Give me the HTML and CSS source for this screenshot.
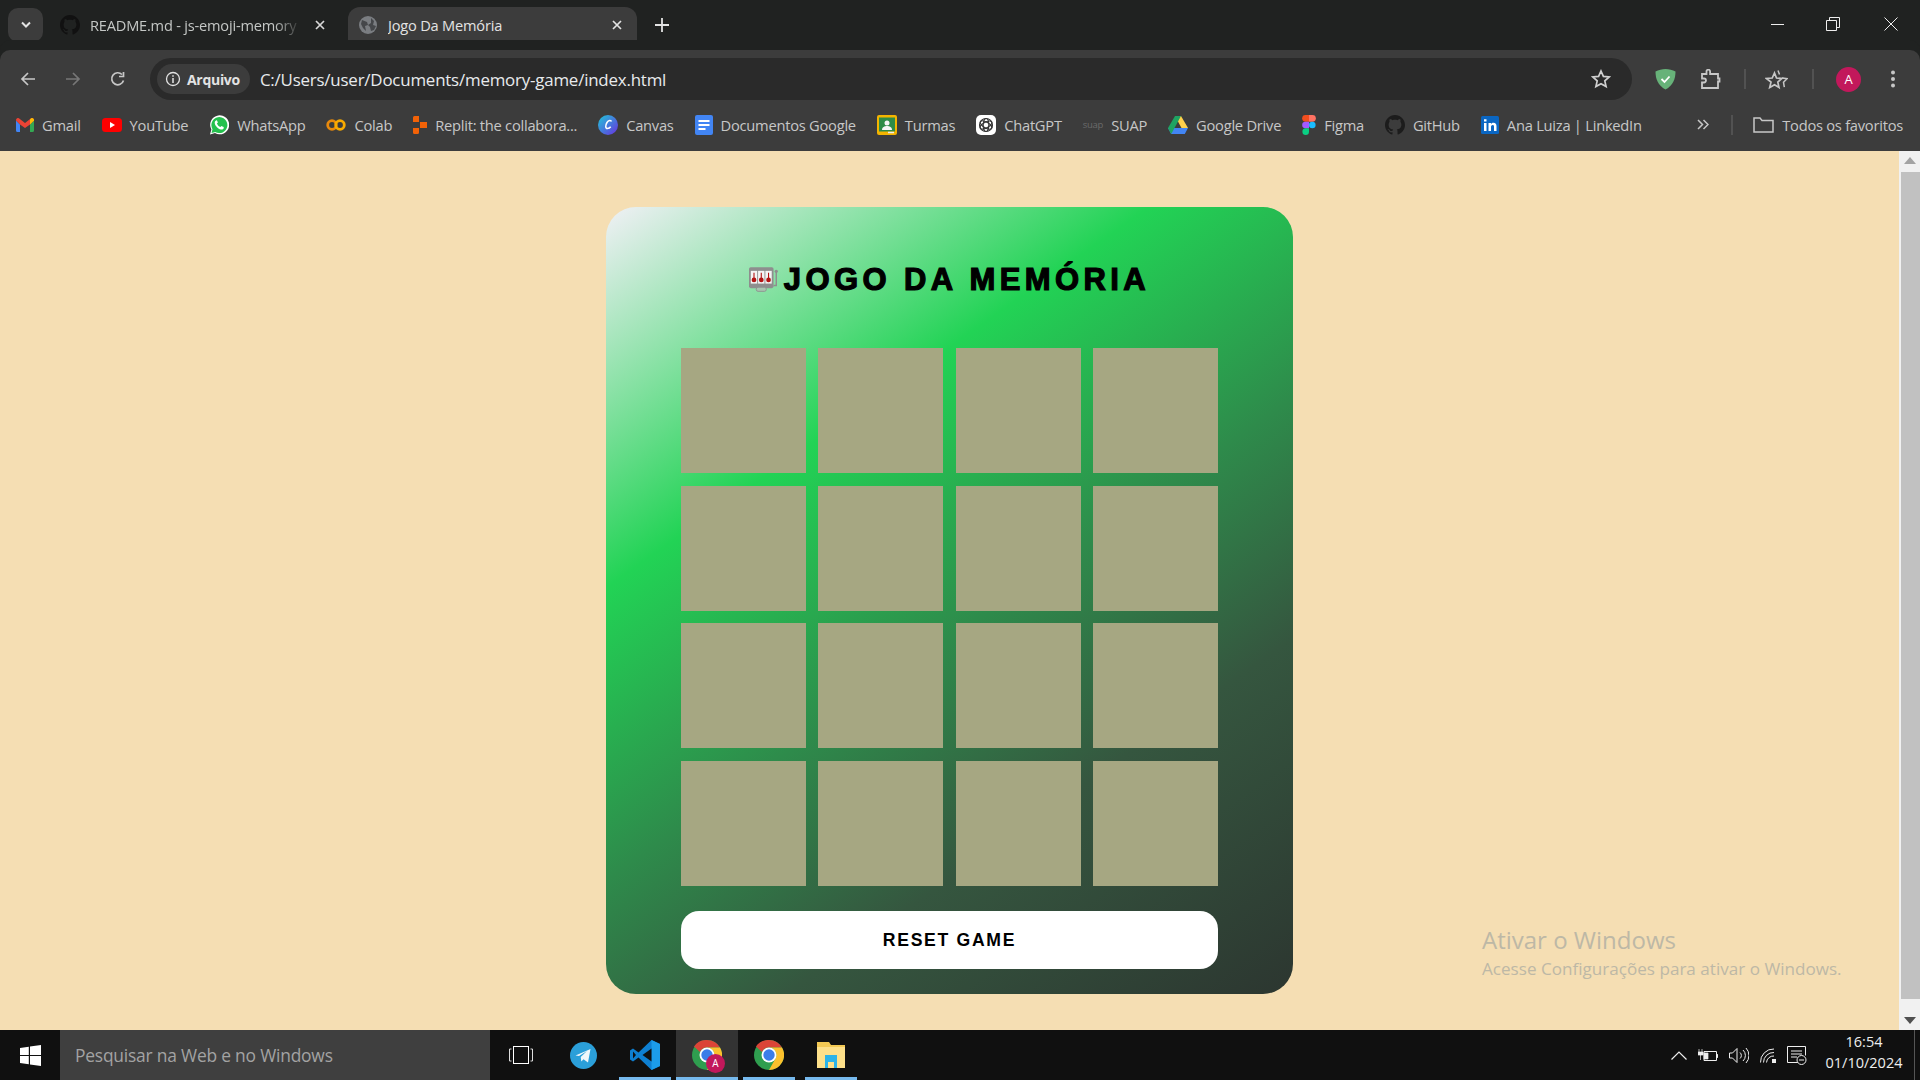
FILE: index.html
```html
<!DOCTYPE html>
<html lang="pt-BR">
<head>
<meta charset="UTF-8">
<title>Jogo Da Memória</title>
<link rel="stylesheet" href="styles.css">
</head>
<body>

<div class="tabbar">
    <div class="tab-search"><svg width="12" height="8" viewBox="0 0 12 8"><path d="M2 1.500l4 4 4-4" fill="none" stroke="#e3e3e3" stroke-width="2"/></svg></div>
    <div class="tab">
        <svg width="20" height="20" viewBox="0 0 16 16"><path fill="#111" d="M8 0C3.600 0 0 3.600 0 8c0 3.500 2.300 6.500 5.500 7.600.4.100.5-.2.500-.4v-1.400c-2.200.5-2.700-1-2.700-1-.4-.9-.9-1.200-.9-1.200-.7-.5.100-.5.100-.5.800.1 1.200.8 1.200.8.700 1.200 1.900.9 2.300.7.100-.5.300-.9.500-1.100-1.800-.2-3.600-.9-3.600-4 0-.9.300-1.600.8-2.100-.1-.2-.4-1 .1-2.100 0 0 .7-.2 2.200.8.600-.2 1.300-.3 2-.3s1.400.1 2 .3c1.500-1 2.200-.8 2.200-.8.400 1.100.2 1.900.1 2.100.5.600.8 1.300.8 2.100 0 3.100-1.900 3.700-3.700 3.900.3.300.6.800.6 1.500v2.200c0 .2.100.5.600.4C13.700 14.500 16 11.500 16 8c0-4.400-3.600-8-8-8z"/></svg>
        <span class="tab-title tab-title-fade">README.md - js-emoji-memory</span>
        <svg class="tab-close" width="12" height="12" viewBox="0 0 12 12"><path d="M2 2l8 8M10 2l-8 8" stroke="#d8d8d8" stroke-width="1.700"/></svg>
    </div>
    <div class="tab tab-active">
        <svg width="20" height="20" viewBox="0 0 20 20"><circle cx="10" cy="10" r="9" fill="#7a7d81"/><path d="M4 5l5 2 1 3-3 1 1 5-3-3-2-4zM13 3l3 3-1 4 3 1-2 4-3 1-1-4-2-2 3-2z" fill="#45474a"/></svg>
        <span class="tab-title">Jogo Da Memória</span>
        <svg class="tab-close" width="12" height="12" viewBox="0 0 12 12"><path d="M2 2l8 8M10 2l-8 8" stroke="#e3e3e3" stroke-width="1.700"/></svg>
    </div>
    <svg class="tab-new" width="14" height="14" viewBox="0 0 14 14"><path d="M7 0v14M0 7h14" stroke="#e3e3e3" stroke-width="1.800"/></svg>
    <div class="window-controls">
        <svg width="14" height="14" viewBox="0 0 14 14"><path d="M0 7.500h13" stroke="#eee" stroke-width="1"/></svg>
        <svg width="14" height="14" viewBox="0 0 14 14"><path d="M.5 3.500h10v10H.5zM3.500 3.500V.5h10v10h-3" fill="none" stroke="#eee" stroke-width="1"/></svg>
        <svg width="14" height="14" viewBox="0 0 14 14"><path d="M.5.5l13 13M13.500.5l-13 13" stroke="#eee" stroke-width="1"/></svg>
    </div>
</div>

<div class="toolbar">
    <div class="nav-buttons">
        <svg width="16" height="16" viewBox="0 0 16 16"><path d="M15 8H2M8 2L2 8l6 6" fill="none" stroke="#c7c7c7" stroke-width="1.700"/></svg>
        <svg width="16" height="16" viewBox="0 0 16 16"><path d="M1 8h13M8 2l6 6-6 6" fill="none" stroke="#777" stroke-width="1.700"/></svg>
        <svg width="16" height="16" viewBox="0 0 16 16"><path d="M13.500 9.500A6 6 0 1 1 12 3.500M13.500 1v4.500H9" fill="none" stroke="#c7c7c7" stroke-width="1.700"/></svg>
    </div>
    <div class="omnibox">
        <div class="site-chip">
            <svg width="16" height="16" viewBox="0 0 16 16"><circle cx="8" cy="8" r="6.500" fill="none" stroke="#e3e3e3" stroke-width="1.300"/><path d="M8 7v5M8 4.200v1.600" stroke="#e3e3e3" stroke-width="1.500"/></svg>
            <span>Arquivo</span>
        </div>
        <span class="url">C:/Users/user/Documents/memory-game/index.html</span>
        <svg class="url-star" width="20" height="20" viewBox="0 0 20 20"><path d="M10 2l2.400 5.400 5.800.6-4.400 3.900 1.300 5.700L10 14.700l-5.100 2.900 1.300-5.700L1.800 8l5.800-.6z" fill="none" stroke="#d0d0d0" stroke-width="1.700"/></svg>
    </div>
    <div class="toolbar-actions">
        <svg class="act-shield" width="21" height="22" viewBox="0 0 21 22"><path d="M10.500 1C7 1 3.500 2 .5 3.500.5 11 3 17.500 10.500 21.500 18 17.500 20.500 11 20.500 3.500 17.500 2 14 1 10.500 1z" fill="#67b279"/><path d="M6.500 11l3 3 5-5.500" fill="none" stroke="#fff" stroke-width="1.800"/></svg>
        <svg class="act-ext" width="20" height="20" viewBox="0 0 20 20"><path d="M1 5h4.500V2.500a1.800 1.800 0 0 1 3.600 0V5H17v4.500h1.500v3H17V19H1v-5.500h2a2 2 0 0 0 0-4H1z" fill="none" stroke="#c7c7c7" stroke-width="1.800"/></svg>
        <div class="act-sep act-sep-a"></div>
        <svg class="act-favs" width="23" height="21" viewBox="0 0 23 21"><path d="M9.500 4l2 5 5.400.5-4.100 3.600 1.200 5.400-4.500-2.800-4.800 2.800 1.300-5.400L1.500 9.500l5.700-.5z" fill="none" stroke="#c7c7c7" stroke-width="1.700"/><path d="M13 1.500l1.500 4M17 9l5 .7-3.500 3.500.8 5" fill="none" stroke="#c7c7c7" stroke-width="1.500"/></svg>
        <div class="act-sep act-sep-b"></div>
        <div class="avatar">A</div>
        <svg class="act-menu" width="4" height="18" viewBox="0 0 4 18"><circle cx="2" cy="2.500" r="2" fill="#c7c7c7"/><circle cx="2" cy="9" r="2" fill="#c7c7c7"/><circle cx="2" cy="15.500" r="2" fill="#c7c7c7"/></svg>
    </div>
</div>

<div class="bookmarks">
    <div class="bm">
        <svg width="18" height="14" viewBox="0 0 18 14"><path d="M0 2.500V12.500A1.500 1.500 0 0 0 1.500 14H4V6.500z" fill="#4285f4"/><path d="M14 6.500V14h2.500a1.500 1.500 0 0 0 1.500-1.500v-10z" fill="#34a853"/><path d="M0 2.500L4 6.500l5 3.500 5-3.500 4-4V2a2 2 0 0 0-3.200-1.600L9 5 3.200.4A2 2 0 0 0 0 2z" fill="#ea4335"/><path d="M14 1.500l.8-1.100A2 2 0 0 1 18 2v.5l-4 4z" fill="#fbbc04"/></svg>
        <span>Gmail</span>
    </div>
    <div class="bm">
        <svg width="20" height="14" viewBox="0 0 20 14"><rect width="20" height="14" rx="3.500" fill="#f00"/><path d="M8 4l5 3-5 3z" fill="#fff"/></svg>
        <span>YouTube</span>
    </div>
    <div class="bm">
        <svg width="20" height="20" viewBox="0 0 20 20"><path d="M1 19.500l1.400-5A9.500 9.500 0 1 1 6 18.100z" fill="#fff"/><path d="M2.500 18l1-3.800A8 8 0 1 1 6.300 17z" fill="#25c04e"/><path d="M7 5.500c-.8.400-1.500 1.500-1.200 3 .5 2.400 3.400 5.500 6 6 1.500.2 2.700-.6 3-1.600l-.2-1-2.200-1-1 1.200c-1.500-.5-3-2-3.500-3.500l1-1-1-2.300z" fill="#fff"/></svg>
        <span>WhatsApp</span>
    </div>
    <div class="bm">
        <svg width="20" height="12" viewBox="0 0 20 12"><circle cx="6" cy="6" r="4.300" fill="none" stroke="#e8890c" stroke-width="2.800"/><circle cx="14" cy="6" r="4.300" fill="none" stroke="#f9ab00" stroke-width="2.800"/></svg>
        <span>Colab</span>
    </div>
    <div class="bm bm-replit">
        <svg width="14" height="18" viewBox="0 0 14 18"><path d="M0 1.500A1.500 1.500 0 0 1 1.500 0H6v6H0zM7 6h7v6H7zM0 12h6v4.500A1.500 1.500 0 0 1 4.500 18h-3A1.500 1.500 0 0 1 0 16.500z" fill="#f26207"/></svg>
        <span>Replit: the collabora...</span>
    </div>
    <div class="bm">
        <svg width="20" height="20" viewBox="0 0 20 20"><defs><linearGradient id="canvasFill" x1="0" y1="0" x2="1" y2="1"><stop offset="0" stop-color="#1fc8d8"/><stop offset="1" stop-color="#6a2fe0"/></linearGradient></defs><circle cx="10" cy="10" r="10" fill="url(#canvasFill)"/><path d="M13.500 6.500c-.5-1.500-3-1.500-4.500 1s-2 6 .5 6c1.300 0 2.500-.8 3.200-1.800" fill="none" stroke="#fff" stroke-width="1.500"/></svg>
        <span>Canvas</span>
    </div>
    <div class="bm">
        <svg width="18" height="20" viewBox="0 0 18 20"><rect width="18" height="20" rx="2" fill="#4285f4"/><path d="M3.500 6h11M3.500 10h11M3.500 14h7" stroke="#fff" stroke-width="2"/></svg>
        <span>Documentos Google</span>
    </div>
    <div class="bm">
        <svg width="20" height="20" viewBox="0 0 20 20"><rect width="20" height="20" rx="2" fill="#f4b400"/><rect x="2" y="2.500" width="16" height="14" fill="#2e8b47"/><circle cx="10" cy="8" r="2.500" fill="#f5f5f5"/><path d="M5 15c0-3 2.500-4 5-4s5 1 5 4z" fill="#f5f5f5"/><path d="M11 17.500h6" stroke="#eee" stroke-width="1.500"/></svg>
        <span>Turmas</span>
    </div>
    <div class="bm">
        <svg width="20" height="20" viewBox="0 0 20 20"><rect width="20" height="20" rx="5" fill="#fff"/><g fill="none" stroke="#333" stroke-width="1.100"><circle cx="10" cy="10" r="6.500"/><ellipse cx="10" cy="10" rx="6.500" ry="2.800" transform="rotate(30 10 10)"/><ellipse cx="10" cy="10" rx="6.500" ry="2.800" transform="rotate(90 10 10)"/><ellipse cx="10" cy="10" rx="6.500" ry="2.800" transform="rotate(150 10 10)"/></g></svg>
        <span>ChatGPT</span>
    </div>
    <div class="bm">
        <span class="suap-logo">suap</span>
        <span>SUAP</span>
    </div>
    <div class="bm">
        <svg width="20" height="18" viewBox="0 0 20 18"><path d="M13 0l7 12h-6.500L7 0z" fill="#ffd04b"/><path d="M4 12h16l-3.200 6H3.200L0 12z" fill="#4285f4"/><path d="M7 0h6L6.500 12 3.200 18 0 12z" fill="#1fa463"/></svg>
        <span>Google Drive</span>
    </div>
    <div class="bm bm-figma">
        <svg width="14" height="20" viewBox="0 0 14 20"><path d="M7 0H3.500a3.300 3.300 0 0 0 0 6.700H7z" fill="#f24e1e"/><path d="M7 0h3.500a3.300 3.300 0 0 1 0 6.700H7z" fill="#ff7262"/><path d="M7 6.700H3.500a3.300 3.300 0 0 0 0 6.600H7z" fill="#a259ff"/><circle cx="10.300" cy="10" r="3.300" fill="#1abcfe"/><path d="M7 13.300H3.500A3.300 3.300 0 1 0 7 16.700z" fill="#0acf83"/></svg>
        <span>Figma</span>
    </div>
    <div class="bm">
        <svg width="20" height="20" viewBox="0 0 16 16"><path fill="#1c1c1c" d="M8 0C3.600 0 0 3.600 0 8c0 3.500 2.300 6.500 5.500 7.600.4.100.5-.2.500-.4v-1.400c-2.200.5-2.700-1-2.700-1-.4-.9-.9-1.200-.9-1.200-.7-.5.100-.5.100-.5.800.1 1.200.8 1.200.8.700 1.200 1.900.9 2.300.7.100-.5.300-.9.500-1.100-1.800-.2-3.600-.9-3.600-4 0-.9.300-1.600.8-2.100-.1-.2-.4-1 .1-2.100 0 0 .7-.2 2.200.8.600-.2 1.300-.3 2-.3s1.400.1 2 .3c1.500-1 2.200-.8 2.200-.8.400 1.100.2 1.900.1 2.100.5.600.8 1.300.8 2.100 0 3.100-1.900 3.700-3.700 3.900.3.300.6.800.6 1.500v2.200c0 .2.100.5.600.4C13.700 14.500 16 11.500 16 8c0-4.400-3.600-8-8-8z"/></svg>
        <span>GitHub</span>
    </div>
    <div class="bm">
        <svg width="18" height="18" viewBox="0 0 18 18"><rect width="18" height="18" rx="1.500" fill="#0a66c2"/><path d="M3 7h2.500v8H3zM3 3.200h2.500v2.400H3zM7.500 7H10v1.200c.5-.9 1.400-1.400 2.500-1.400 2 0 3 1.200 3 3.500V15H13v-4.200c0-1.200-.4-1.800-1.300-1.800-1 0-1.700.7-1.700 2V15H7.500z" fill="#fff"/></svg>
        <span>Ana Luiza | LinkedIn</span>
    </div>
    <div class="bm-end">
        <svg width="12" height="11" viewBox="0 0 12 11"><path d="M1 1l4.500 4.500L1 10M6.500 1L11 5.500 6.500 10" fill="none" stroke="#c7c7c7" stroke-width="1.500"/></svg>
        <div class="bm-sep"></div>
        <div class="bm">
            <svg width="21" height="16" viewBox="0 0 21 16"><path d="M1 15V1h6l2 2.500h11V15z" fill="none" stroke="#c7c7c7" stroke-width="1.500"/></svg>
            <span>Todos os favoritos</span>
        </div>
    </div>
</div>

<div class="viewport">
    <main class="page">
        <div class="game-container">
            <h1 class="game-title">
                <svg class="slot-emoji" width="30" height="27" viewBox="0 0 33 27">
                    <rect x="0" y="0" width="27" height="23" rx="2" fill="#8e8e8e"/>
                    <rect x="8" y="22" width="11" height="4.500" rx="2" fill="#a8c4b0" stroke="#8e8e8e"/>
                    <rect x="2" y="4" width="7" height="14" fill="#f4f4f4"/>
                    <rect x="10" y="4" width="7" height="14" fill="#f4f4f4"/>
                    <rect x="18" y="4" width="7" height="14" fill="#f4f4f4"/>
                    <path d="M5.500 6v6M13.500 6v6M21.500 6v6" stroke="#b31414" stroke-width="1.200"/>
                    <circle cx="5.500" cy="14" r="2.600" fill="#b31414"/>
                    <circle cx="13.500" cy="14" r="2.600" fill="#b31414"/>
                    <circle cx="21.500" cy="14" r="2.600" fill="#b31414"/>
                    <path d="M30 5v15h-3" fill="none" stroke="#8e8e8e" stroke-width="1.600"/>
                    <circle cx="30" cy="4.500" r="1.800" fill="#8e8e8e"/>
                </svg>JOGO DA MEMÓRIA
            </h1>
            <div class="game">
                <div class="item"></div><div class="item"></div><div class="item"></div><div class="item"></div>
                <div class="item"></div><div class="item"></div><div class="item"></div><div class="item"></div>
                <div class="item"></div><div class="item"></div><div class="item"></div><div class="item"></div>
                <div class="item"></div><div class="item"></div><div class="item"></div><div class="item"></div>
            </div>
            <button class="reset">RESET GAME</button>
        </div>
        <div class="watermark">
            <div class="watermark-title">Ativar o Windows</div>
            <div class="watermark-sub">Acesse Configurações para ativar o Windows.</div>
        </div>
    </main>
    <div class="scrollbar">
        <svg width="12" height="7" viewBox="0 0 12 7"><path d="M6 0l6 7H0z" fill="#a3a3a3"/></svg>
        <div class="scroll-thumb"></div>
        <svg width="12" height="7" viewBox="0 0 12 7"><path d="M6 7L0 0h12z" fill="#505050"/></svg>
    </div>
</div>

<div class="taskbar">
    <div class="start">
        <svg width="21" height="21" viewBox="0 0 21 21"><path d="M0 3l8.800-1.300v8.200H0zM10 1.500L21 0v9.900H10zM0 11.100h8.800v8.200L0 18zM10 11.100h11V21l-11-1.500z" fill="#fff"/></svg>
    </div>
    <div class="task-search">Pesquisar na Web e no Windows</div>
    <div class="task-icons">
        <div class="task-icon">
            <svg width="24" height="18" viewBox="0 0 24 18"><rect x="4.500" y=".5" width="15" height="17" fill="none" stroke="#fff"/><path d="M2.500 3H.5v12h2M21.500 3h2v12h-2" fill="none" stroke="#ddd"/></svg>
        </div>
        <div class="task-icon">
            <svg width="27" height="27" viewBox="0 0 27 27"><circle cx="13.500" cy="13.500" r="13.500" fill="#2b9fd9"/><path d="M5.500 13.500L20.500 7l-2.500 13.500-4.500-3.300-2.200 2.300-.6-4.500 6.300-6-8 5z" fill="#f2f7fa"/></svg>
        </div>
        <div class="task-icon task-open">
            <svg width="30" height="30" viewBox="0 0 30 30"><path d="M21.500 0L30 4v22l-8.500 4-13-12.500L3 21.500 0 19.500v-9l3-2 5.500 4z" fill="#0e7fd1"/><path d="M21.500 0L30 4v22l-8.500 4z" fill="#1c9cea"/><path d="M21.500 8.500L12.500 15l9 6.500z" fill="#101010"/><path d="M3 11.500L6 15l-3 3.500z" fill="#101010"/></svg>
        </div>
        <div class="task-icon task-open task-active">
            <svg class="chrome-logo" width="30" height="30" viewBox="0 0 30 30"><circle cx="15" cy="15" r="15" fill="#2f9e4f"/><path d="M15 0a15 15 0 0 1 13 7.500H15a7.500 7.500 0 0 0-7 4.500L2 6.500A15 15 0 0 1 15 0z" fill="#db4437"/><path d="M28 7.500A15 15 0 0 1 15 30l6.500-11.500A7.500 7.500 0 0 0 15 7.500z" fill="#fbc02d"/><circle cx="15" cy="15" r="7.500" fill="#fff"/><circle cx="15" cy="15" r="5.700" fill="#3b7de8"/></svg>
            <span class="chrome-badge">A</span>
        </div>
        <div class="task-icon task-open">
            <svg width="30" height="30" viewBox="0 0 30 30"><circle cx="15" cy="15" r="15" fill="#2f9e4f"/><path d="M15 0a15 15 0 0 1 13 7.500H15a7.500 7.500 0 0 0-7 4.500L2 6.500A15 15 0 0 1 15 0z" fill="#db4437"/><path d="M28 7.500A15 15 0 0 1 15 30l6.500-11.500A7.500 7.500 0 0 0 15 7.500z" fill="#fbc02d"/><circle cx="15" cy="15" r="7.500" fill="#fff"/><circle cx="15" cy="15" r="5.700" fill="#3b7de8"/></svg>
        </div>
        <div class="task-icon task-open">
            <svg width="28" height="26" viewBox="0 0 28 26"><path d="M0 0h12l2 3h14v23H0z" fill="#f3c954"/><path d="M0 5h28v21H0z" fill="#fde08a"/><path d="M8 13h12v13h-3v-6h-6v6H8z" fill="#2bb3e8"/></svg>
        </div>
    </div>
    <div class="tray">
        <svg width="16" height="9" viewBox="0 0 16 9"><path d="M.5 8.500L8 1l7.500 7.500" fill="none" stroke="#eee" stroke-width="1.200"/></svg>
        <svg width="20" height="13" viewBox="0 0 20 13"><path d="M6 2.500h12.500v9H6z" fill="none" stroke="#eee"/><path d="M6 4h4v6H6zM18.500 5.500H20v3h-1.500zM1 0v3M4 0v3M0 3h5v3H0zM2.500 6v5" fill="#eee" stroke="#eee" stroke-width=".7"/></svg>
        <svg width="20" height="17" viewBox="0 0 20 17"><path d="M.5 6h3L8 1.500v14L3.500 11h-3z" fill="none" stroke="#eee"/><path d="M11 5.500a4 4 0 0 1 0 6M14 3a7.500 7.500 0 0 1 0 11M17 1a11 11 0 0 1 0 15" fill="none" stroke="#eee"/></svg>
        <svg width="16" height="16" viewBox="0 0 16 16"><path d="M.5 15.500A13 13 0 0 1 14 2M3.500 15.500A10 10 0 0 1 14 5.500M6.500 15.500A7 7 0 0 1 14 9" fill="none" stroke="#eee"/><rect x="12" y="12" width="4" height="4" fill="#eee"/></svg>
        <svg width="20" height="19" viewBox="0 0 20 19"><path d="M13 16.500H.5V.5h18v9" fill="none" stroke="#eee"/><path d="M4 5h11M4 8h11M4 11h6" stroke="#eee"/><circle cx="14.500" cy="14" r="4.500" fill="#101010" stroke="#eee"/><path d="M12 14h5" stroke="#eee"/></svg>
    </div>
    <div class="clock">
        <div>16:54</div>
        <div>01/10/2024</div>
    </div>
    <div class="show-desktop"></div>
</div>

</body>
</html>
```

FILE: styles.css
```css
* {
    box-sizing: border-box;
}
html, body {
    height: 100%;
}
body {
    margin: 0;
    display: flex;
    flex-direction: column;
    overflow: hidden;
    font-family: "Open Sans", "Noto Sans", Arial, sans-serif;
    background-color: #f5deb3;
}

/* tabs */
.tabbar {
    height: 50px;
    flex: none;
    display: flex;
    align-items: flex-end;
    padding-left: 8px;
    background-color: #202221;
    position: relative;
}
.tab-search {
    width: 35px;
    height: 34px;
    margin-bottom: 8px;
    border-radius: 10px;
    background-color: #3c3c3c;
    display: flex;
    align-items: center;
    justify-content: center;
}
.tab {
    width: 300px;
    height: 43px;
    padding: 0 14px 7px 10px;
    display: flex;
    align-items: center;
    gap: 10px;
    color: #c4c7c5;
    font-size: 14.600px;
    letter-spacing: -0.2px;
}
.tab:nth-child(2) {
    margin-left: 5px;
    padding-left: 12px;
    padding-right: 22px;
}
.tab-active {
    width: 289px;
    margin-left: 0;
    border-radius: 12px 12px 0 0;
    background-color: #3c3c3c;
    color: #e3e3e3;
}
.tab-title {
    flex: 1;
    white-space: nowrap;
    overflow: hidden;
}
.tab-title-fade {
    -webkit-mask-image: linear-gradient(to right, #000 86%, transparent 99%);
    mask-image: linear-gradient(to right, #000 86%, transparent 99%);
}
.tab-new {
    margin: 0 0 18px 18px;
}
.window-controls {
    margin-left: auto;
    margin-bottom: 19px;
    padding-right: 22px;
    display: flex;
    gap: 44px;
}
.window-controls svg:first-child {
    margin-right: -3px;
}

/* address bar */
.toolbar {
    height: 50px;
    flex: none;
    display: flex;
    align-items: center;
    background-color: #3c3c3c;
    border-radius: 10px 10px 0 0;
    box-shadow: 0 -10px 0 #202221;
    position: relative;
}
.nav-buttons {
    width: 150px;
    flex: none;
    margin-top: 8px;
    padding-left: 20px;
    display: flex;
    gap: 29px;
}
.omnibox {
    width: 1482px;
    height: 42px;
    margin-top: 8px;
    padding: 0 21px 0 7px;
    flex: none;
    display: flex;
    align-items: center;
    border-radius: 21px;
    background-color: #2a2a2a;
}
.site-chip {
    height: 30px;
    padding: 0 10px 0 8px;
    display: flex;
    align-items: center;
    gap: 6px;
    border-radius: 15px;
    background-color: #3c3c3c;
    color: #e3e3e3;
    font-size: 14px;
    font-weight: 700;
    letter-spacing: -0.3px;
}
.url {
    margin-left: 10px;
    color: #e8eaed;
    font-size: 16.900px;
    letter-spacing: -0.2px;
}
.url-star {
    margin-left: auto;
}
.toolbar-actions {
    flex: 1;
    display: flex;
    align-items: center;
    margin-top: 8px;
    padding-left: 23px;
}
.act-ext {
    margin-left: 25px;
}
.act-sep {
    width: 2px;
    height: 20px;
    background-color: #525252;
}
.act-sep-a {
    margin-left: 23px;
}
.act-favs {
    margin-left: 19px;
}
.act-sep-b {
    margin-left: 24px;
}
.avatar {
    width: 25px;
    height: 25px;
    margin-left: 22px;
    border-radius: 50%;
    background-color: #c2185b;
    color: #fff;
    font-size: 13px;
    text-align: center;
    line-height: 25px;
}
.act-menu {
    margin-left: 30px;
}

/* bookmarks */
.bookmarks {
    height: 51px;
    flex: none;
    display: flex;
    align-items: center;
    gap: 21px;
    padding: 0 0 2px 16px;
    background-color: #3c3c3c;
    color: #c7c7c7;
    font-size: 14.700px;
    letter-spacing: -0.25px;
    white-space: nowrap;
}
.bm {
    display: flex;
    align-items: center;
    gap: 8px;
}
.suap-logo {
    color: #6a6a6a;
    font-size: 9.500px;
}
.bm-end {
    margin-left: auto;
    padding-right: 17px;
    display: flex;
    align-items: center;
}
.bm-sep {
    width: 2px;
    height: 20px;
    margin: 0 20px 0 22px;
    background-color: #525252;
}

/* page */
.viewport {
    flex: 1;
    display: flex;
    min-height: 0;
}
.page {
    flex: 1;
    padding-top: 56px;
    position: relative;
}
.game-container {
    width: 687px;
    height: 787px;
    margin: 0 auto;
    padding: 0 75px;
    border-radius: 30px;
    background: linear-gradient(145deg, #f1f0f6 0%, #22d355 30%, #2e8b4b 53%, #35563f 72%, #2c3630 100%);
}
.game-title {
    height: 141px;
    margin: 0;
    padding-top: 55px;
    display: flex;
    justify-content: center;
    align-items: flex-start;
    color: #000;
    font-family: "Liberation Sans", Arial, sans-serif;
    font-size: 31px;
    font-weight: 700;
    line-height: 36px;
    letter-spacing: 4.400px;
    -webkit-text-stroke: 1.200px #000;
    white-space: nowrap;
}
.slot-emoji {
    margin: 4px 5px 0 0;
    flex: none;
}
.game {
    display: grid;
    grid-template-columns: repeat(4, 125px);
    grid-auto-rows: 125px;
    gap: 12.500px 12.330px;
}
.item {
    background-color: #a6a782;
}
.reset {
    display: block;
    width: 100%;
    height: 58px;
    margin-top: 25px;
    padding-top: 2px;
    border: none;
    border-radius: 18px;
    background-color: #fff;
    color: #000;
    font-family: "Liberation Sans", Arial, sans-serif;
    font-size: 17.600px;
    font-weight: 700;
    letter-spacing: 1.700px;
}
.watermark {
    position: absolute;
    left: 1482px;
    top: 773px;
    color: #bdb8a6;
}
.watermark-title {
    font-size: 24px;
    line-height: 32px;
}
.watermark-sub {
    font-size: 17.100px;
    line-height: 26px;
}

/* scrollbar */
.scrollbar {
    width: 21px;
    flex: none;
    padding: 6px 0;
    display: flex;
    flex-direction: column;
    align-items: center;
    gap: 8px;
    background-color: #f1f1f1;
}
.scroll-thumb {
    flex: 1;
    width: 19px;
    margin-left: 2px;
    margin-bottom: 10px;
    background-color: #c1c1c1;
}

/* windows taskbar */
.taskbar {
    height: 50px;
    flex: none;
    display: flex;
    background-color: #101010;
    position: relative;
}
.start {
    width: 60px;
    display: flex;
    align-items: center;
    justify-content: center;
}
.task-search {
    width: 430px;
    padding-left: 15px;
    background-color: #3f3f3f;
    color: #a3a3a3;
    font-size: 17.400px;
    letter-spacing: -0.2px;
    line-height: 50px;
}
.task-icons {
    display: flex;
}
.task-icon {
    width: 62px;
    display: flex;
    align-items: center;
    justify-content: center;
    position: relative;
}
.task-open::after {
    content: "";
    position: absolute;
    left: 5px;
    right: 5px;
    bottom: 0;
    height: 3px;
    background-color: #76b9ed;
}
.task-active {
    background-color: #333;
}
.task-active::after {
    left: 0;
    right: 0;
}
.chrome-badge {
    position: absolute;
    left: 30px;
    top: 24px;
    width: 19px;
    height: 19px;
    border-radius: 50%;
    background-color: #c2185b;
    color: #fff;
    font-size: 10px;
    text-align: center;
    line-height: 19px;
}
.tray {
    margin-left: auto;
    display: flex;
    align-items: center;
    gap: 11px;
}
.clock {
    width: 104px;
    margin-left: 5px;
    padding-top: 1px;
    color: #eee;
    font-size: 14.500px;
    line-height: 21px;
    text-align: center;
}
.show-desktop {
    width: 6px;
    margin-left: -2px;
    border-left: 1px solid #555;
}
```
